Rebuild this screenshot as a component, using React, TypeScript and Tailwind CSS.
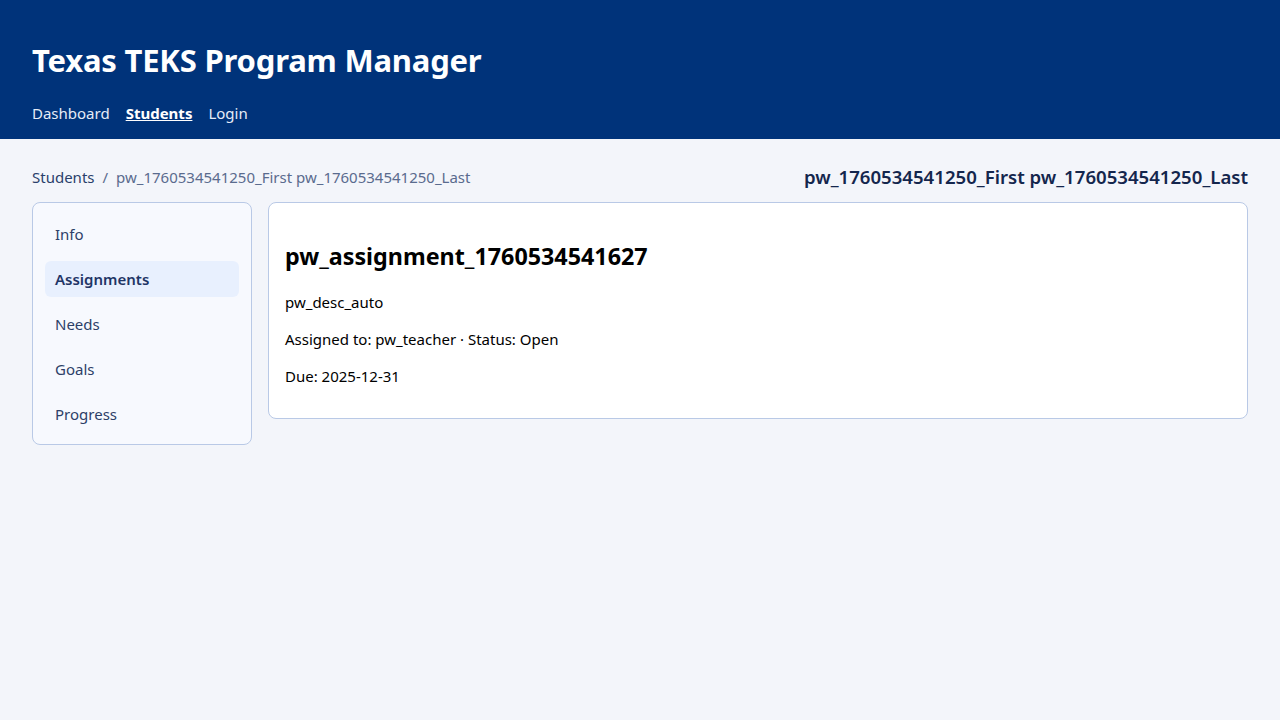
import React from 'react';

const tabs = ['Info', 'Assignments', 'Needs', 'Goals', 'Progress'];

const App: React.FC = () => {
  const active = 'Assignments';

  return (
    <div
      className="min-h-screen bg-[#f3f5fa] text-black"
      style={{ fontFamily: '"Noto Sans", "Open Sans", sans-serif' }}
    >
      <header className="bg-[#00337a] px-8 pt-[37px] pb-[14px] h-[139px]">
        <h1 className="text-[31px] font-bold text-white leading-[46px] tracking-[-0.2px]">
          Texas TEKS Program Manager
        </h1>
        <nav className="mt-[19px] flex gap-4 text-[15px] leading-[22px] text-[#e6ecf7]">
          <a>Dashboard</a>
          <a className="font-bold text-white underline">Students</a>
          <a>Login</a>
        </nav>
      </header>

      <main className="px-8 pt-[25px]">
        {/* breadcrumb + name */}
        <div className="flex items-center justify-between h-[26px]">
          <div className="flex items-center gap-2 text-[15px] text-[#5a6b8e]">
            <span className="text-[#2a3f6b]">Students</span>
            <span>/</span>
            <span>pw_1760534541250_First pw_1760534541250_Last</span>
          </div>
          <h2 className="text-[18.6px] font-semibold text-[#14264d]">
            pw_1760534541250_First pw_1760534541250_Last
          </h2>
        </div>

        <div className="mt-[12px] flex items-start gap-4">
          {/* sidebar tabs */}
          <aside className="w-[220px] shrink-0 rounded-lg border border-[#b9c9e6] bg-[#f7f9fe] pt-[13px] px-3 pb-3 flex flex-col gap-[9px]">
            {tabs.map((t) => (
              <div
                key={t}
                className={
                  t === active
                    ? 'h-9 flex items-center px-[10px] rounded-md bg-[#e8f0fe] text-[15px] font-semibold text-[#1f3566]'
                    : 'h-9 flex items-center px-[10px] rounded-md text-[15px] text-[#2d3f68]'
                }
              >
                {t}
              </div>
            ))}
          </aside>

          {/* assignment card */}
          <section className="flex-1 rounded-lg border border-[#b9c9e6] bg-white px-4 pt-[37px] pb-[31px]">
            <h3 className="text-[23.3px] font-bold leading-[32px]">pw_assignment_1760534541627</h3>
            <div className="mt-[19px] flex flex-col gap-[15px] text-[15px] leading-[22px]">
              <p>pw_desc_auto</p>
              <p>Assigned to: pw_teacher · Status: Open</p>
              <p>Due: 2025-12-31</p>
            </div>
          </section>
        </div>
      </main>
    </div>
  );
};

export default App;
